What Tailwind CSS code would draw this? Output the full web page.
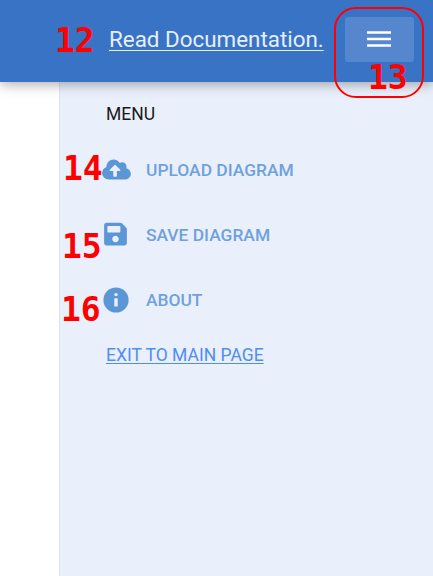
<!DOCTYPE html>
<html>
<head>
<meta charset="utf-8">
<script src="https://cdn.jsdelivr.net/npm/@tailwindcss/browser@4"></script>
</head>
<body class="bg-white font-['Roboto',sans-serif]">
<div class="relative w-[433px] h-[576px] overflow-hidden">
  <header class="relative z-10 h-[82px] bg-[#3973c6] shadow-[0_2px_12px_rgba(0,0,0,0.35)] flex items-center justify-end pl-[109px] pr-[19px]">
    <a class="text-[22.4px] leading-none text-[#e6eefb] underline underline-offset-[3px] decoration-1 mr-[21px] -mt-[3px] whitespace-nowrap">Read Documentation.</a>
    <button class="w-[70px] h-[45px] -mt-[4px] bg-white/15 rounded-[3px] flex items-center justify-center">
      <svg width="24" height="16" viewBox="0 0 24 16"><path d="M0 1.5h24M0 8h24M0 14.500h24" stroke="#fff" stroke-width="2.500"/></svg>
    </button>
  </header>
  <div class="absolute left-[59px] top-[82px] w-[374px] h-[494px] bg-[#e9f0fb] border-l border-[#dde3ec] pl-[46px] pt-[22px]">
    <div class="text-[17.5px] leading-[20px] text-[#1a1a1a] h-[20px]">MENU</div>
    <nav class="flex flex-col mt-[14px] text-[#6fa1dc] text-[17.4px] font-medium leading-[20px]">
      <div class="flex items-center h-[65px] -mt-[1px]">
        <svg class="w-[29px] h-[23px] -ml-[4px] mr-[15px]" viewBox="0 0 640 512"><path fill="#5b96d6" d="M537.6 226.6c4.1-10.7 6.4-22.4 6.4-34.6 0-53-43-96-96-96-19.7 0-38.1 6-53.3 16.2C367 64.2 315.3 32 256 32c-88.4 0-160 71.6-160 160 0 2.7.1 5.4.2 8.1C40.2 219.8 0 273.2 0 336c0 79.500 64.500 144 144 144h368c70.700 0 128-57.300 128-128 0-61.900-44-113.600-102.400-125.400zM393.400 288H328v112c0 8.800-7.200 16-16 16h-48c-8.800 0-16-7.200-16-16V288h-65.400c-14.300 0-21.400-17.200-11.300-27.300l105.400-105.400c6.200-6.200 16.400-6.200 22.600 0l105.400 105.400c10.100 10.100 2.900 27.300-11.300 27.300z"/></svg>
        <span>UPLOAD DIAGRAM</span>
      </div>
      <div class="flex items-center h-[65px]">
        <svg class="w-[23px] h-[26px] -ml-[2px] mr-[19px] -mt-[2px]" viewBox="0 0 448 512"><path fill="#5b96d6" d="M433.900 129.900l-83.900-83.900A48 48 0 0 0 316.100 32H48C21.500 32 0 53.500 0 80v352c0 26.500 21.500 48 48 48h352c26.500 0 48-21.500 48-48V163.900a48 48 0 0 0-14.100-34zM224 416c-35.300 0-64-28.700-64-64 0-35.300 28.700-64 64-64s64 28.700 64 64c0 35.300-28.700 64-64 64zm96-304.500V212c0 6.600-5.400 12-12 12H76c-6.600 0-12-5.400-12-12V108c0-6.600 5.400-12 12-12h228.500c3.200 0 6.200 1.300 8.500 3.500l3.500 3.500c2.300 2.300 3.500 5.300 3.500 8.500z"/></svg>
        <span>SAVE DIAGRAM</span>
      </div>
      <div class="flex items-center h-[65px]">
        <svg class="w-[26px] h-[26px] -ml-[3px] mr-[17px]" viewBox="0 0 512 512"><circle cx="256" cy="256" r="248" fill="#5b96d6"/><circle cx="256" cy="150" r="34" fill="#e9f0fb"/><rect x="222" y="220" width="68" height="165" rx="10" fill="#e9f0fb"/></svg>
        <span>ABOUT</span>
      </div>
    </nav>
    <a class="block mt-[13px] text-[17.5px] leading-[20px] text-[#4f8df5] underline underline-offset-2">EXIT TO MAIN PAGE</a>
  </div>
  <!-- annotations over the screenshot -->
  <div class="absolute z-20 left-[334px] top-[7px] w-[90px] h-[91px] border-2 border-[#f00] rounded-[22px]"></div>
  <span class="absolute z-20 left-[55px] top-[22px] font-['DejaVu_Sans_Mono',monospace] font-bold text-[33px] leading-[38px] text-[#f00]">12</span>
  <span class="absolute z-20 left-[368px] top-[59px] font-['DejaVu_Sans_Mono',monospace] font-bold text-[33px] leading-[38px] text-[#f00]">13</span>
  <span class="absolute z-20 left-[63px] top-[150px] font-['DejaVu_Sans_Mono',monospace] font-bold text-[33px] leading-[38px] text-[#f00]">14</span>
  <span class="absolute z-20 left-[62px] top-[228px] font-['DejaVu_Sans_Mono',monospace] font-bold text-[33px] leading-[38px] text-[#f00]">15</span>
  <span class="absolute z-20 left-[61px] top-[291px] font-['DejaVu_Sans_Mono',monospace] font-bold text-[33px] leading-[38px] text-[#f00]">16</span>
</div>
</body>
</html>
